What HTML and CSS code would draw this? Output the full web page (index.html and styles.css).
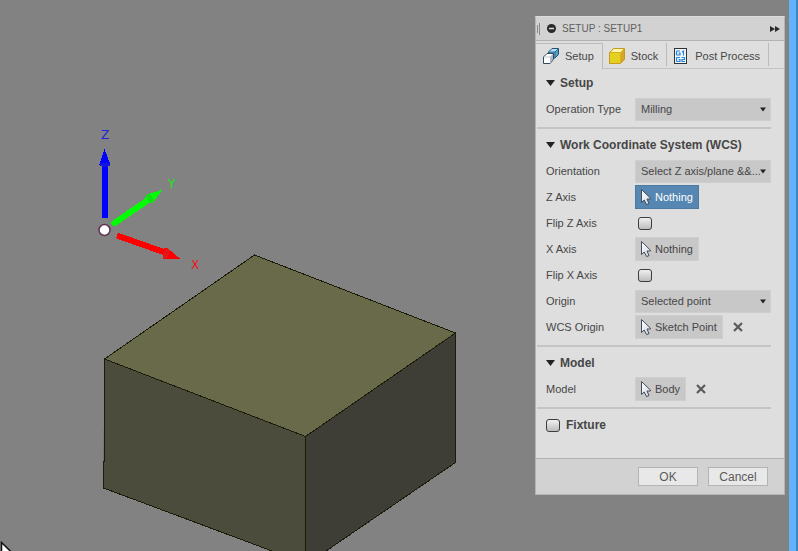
FILE: index.html
```html
<!DOCTYPE html>
<html lang="en">
<head>
<meta charset="utf-8">
<title>Setup</title>
<meta name="viewport" content="width=device-width, initial-scale=1">
<link rel="stylesheet" href="styles.css">
</head>
<body>
<svg class="symbols" aria-hidden="true">
  <defs>
    <linearGradient id="cursor-fill" x1="0" y1="0" x2="1" y2="1">
      <stop offset="0" stop-color="#fff"/><stop offset="1" stop-color="#cfd5de"/>
    </linearGradient>
    <symbol id="cursor" viewBox="0 0 12 18">
      <path d="M1.5 1.5V14.5L4.2 12L6.6 16.6L9 15.6L7 11H10.5V10.2Z" fill="url(#cursor-fill)" stroke="#434b5c" stroke-width="1"/>
    </symbol>
    <symbol id="cross" viewBox="0 0 10 10">
      <path d="M1 1L9 9M9 1L1 9" stroke="#5a5a5a" stroke-width="2.2" fill="none"/>
    </symbol>
    <symbol id="caret" viewBox="0 0 6 5"><path d="M0 0.5H6L3 4.5Z" fill="#222"/></symbol>
    <symbol id="disclosure" viewBox="0 0 9 6"><path d="M0 0H9L4.5 6Z" fill="#222"/></symbol>
  </defs>
</svg>
<main class="viewport">
  <svg class="scene" role="img" aria-label="Stock body with coordinate axes">
    <path d="M254.500 255L455.500 333L305.500 436.500L104.500 359Z" fill="#696a4a"/>
    <path d="M104.500 359L305.500 436.500V563.500L103.500 488Z" fill="#4b4c3b"/>
    <path d="M305.500 436.500L455.500 333V462.500L305.500 565Z" fill="#3e3d36"/>
    <g fill="none" stroke="#1b1b0a" stroke-width="1" shape-rendering="crispEdges">
      <path d="M254.500 255L455.500 333L305.500 436.500L104.500 359Z"/>
      <path d="M104.500 359V461H103.500V488L305.500 563.500V436.500M455.500 333V462.500L305.500 565"/>
    </g>
    <g shape-rendering="crispEdges">
      <path d="M102 217.500V164H108V217.500Z" fill="#00f"/>
      <path d="M104.500 149L110.500 165Q105 169 99 165Z" fill="#00f"/>
      <path d="M99 165Q105 160 110.500 165Q105 169 99 165Z" fill="#1414dc"/>
      <path d="M114.500 223L149 199.500" stroke="#0f0" stroke-width="6" stroke-linecap="round"/>
      <path d="M162 190L153 203L148 203.500L145 197L148 194Z" fill="#0f0"/>
      <ellipse cx="150" cy="198.500" rx="3" ry="5" transform="rotate(-35 150 198.500)" fill="#10e010"/>
      <path d="M117 235.500L165 252.500" stroke="red" stroke-width="6"/>
      <path d="M181 259.500L163 258.500L164 248L168 248.500Z" fill="red"/>
      <ellipse cx="166" cy="253.500" rx="3" ry="5.500" transform="rotate(20 166 253.500)" fill="#e61414"/>
    </g>
    <circle cx="104.500" cy="230" r="5.500" fill="#fff" stroke="#603550" stroke-width="1.500"/>
    <g class="axis-name">
      <text x="101" y="139" fill="#2222dc">Z</text>
      <text x="168" y="188" fill="#0cef0c">Y</text>
      <text x="191" y="269" fill="#ec1818">X</text>
    </g>
    <path d="M1.500 542.500V560H19.500Z" fill="#fff" stroke="#111" stroke-width="1.500"/>
  </svg>

  <form class="panel" onsubmit="return false">
    <header class="titlebar">
      <svg class="grip" viewBox="0 0 3 12"><path d="M0.500 2V10M2.500 0V12" stroke="#888" fill="none"/></svg>
      <svg class="collapse" viewBox="0 0 9 9"><circle cx="4.500" cy="4.500" r="4.500" fill="#2a2a2a"/><path d="M2 4.500H7" stroke="#ddd" stroke-width="1.500"/></svg>
      <h1 class="title">SETUP : SETUP1</h1>
      <button class="expand" type="button" aria-label="Dock panel"><svg viewBox="0 0 10 6"><path d="M0 0L5 3L0 6ZM5 0L10 3L5 6Z" fill="#2a2a2a"/></svg></button>
    </header>

    <nav class="tabs">
      <button class="tab tab-active" type="button">
        <svg class="tab-icon" viewBox="0 0 16 16">
          <path d="M5.500 4L9 0.500H15.500V6.500L12 10H5.500Z" fill="#5b9cc4" stroke="#1f5279"/>
          <path d="M6 4L9.200 1H15L12 4Z" fill="#b9dcef"/>
          <path d="M5.500 4H12L15 1M12 4V9.500" stroke="#2f719e" fill="none"/>
          <path d="M0.500 9L4 5.500H10.500V11.500L7 15.500H0.500Z" fill="#fff" stroke="#34485e"/>
          <path d="M7 9.500V15L10 11.500V6.500Z" fill="#a9b6c5"/>
          <path d="M1 9H7L10 6" stroke="#c2cbd5" fill="none"/>
        </svg>Setup
      </button>
      <button class="tab" type="button">
        <svg class="tab-icon" viewBox="0 0 16 16">
          <path d="M0.500 4.500L4.500 0.500H15.500V11.500L11.500 15.500H0.500Z" fill="#e5d01f" stroke="#c99a1c"/>
          <path d="M1.500 4.200L5 1H14.500L11.500 4.200Z" fill="#fff7b0"/>
          <path d="M12 5V15L15 11.500V1.500Z" fill="#d5a62a"/>
          <path d="M1 4.500H11.500V15M11.500 4.500L15 1" stroke="#d8b025" fill="none"/>
        </svg>Stock
      </button>
      <button class="tab" type="button">
        <svg class="tab-icon tab-icon-code" viewBox="0 0 13 16">
          <rect x="0.500" y="0.500" width="12" height="15" fill="#f2f5f8" stroke="#30343a"/>
          <g fill="none" stroke="#2486e0" stroke-width="1.200">
            <path d="M6 3H3L2.500 3.500V6.500L3 7H6V5H4.500M8 4L9.500 3V7.500"/>
            <path d="M6 9.500H3L2.500 10V13L3 13.500H6V11.500H4.500M7.500 9.500H10.500V11.500H8V13.500H11"/>
          </g>
        </svg>Post Process
      </button>
    </nav>

    <div class="body">
      <section class="group">
        <h2 class="heading"><svg class="disclosure"><use href="#disclosure"/></svg>Setup</h2>
        <div class="row">
          <label class="label" for="operation">Operation Type</label>
          <div class="dropdown"><select id="operation"><option>Milling</option></select><svg class="caret"><use href="#caret"/></svg></div>
        </div>
      </section>

      <section class="group">
        <h2 class="heading"><svg class="disclosure"><use href="#disclosure"/></svg>Work Coordinate System (WCS)</h2>
        <div class="row">
          <label class="label" for="orientation">Orientation</label>
          <div class="dropdown"><select id="orientation"><option>Select Z axis/plane &amp;&amp;...</option></select><svg class="caret"><use href="#caret"/></svg></div>
        </div>
        <div class="row">
          <label class="label" for="z-axis">Z Axis</label>
          <button class="pick pick-active" id="z-axis" type="button"><svg class="cursor"><use href="#cursor"/></svg>Nothing</button>
        </div>
        <div class="row">
          <label class="label" for="flip-z">Flip Z Axis</label>
          <input class="check check-row" id="flip-z" type="checkbox">
        </div>
        <div class="row">
          <label class="label" for="x-axis">X Axis</label>
          <button class="pick" id="x-axis" type="button"><svg class="cursor"><use href="#cursor"/></svg>Nothing</button>
        </div>
        <div class="row">
          <label class="label" for="flip-x">Flip X Axis</label>
          <input class="check check-row" id="flip-x" type="checkbox">
        </div>
        <div class="row">
          <label class="label" for="origin">Origin</label>
          <div class="dropdown"><select id="origin"><option>Selected point</option></select><svg class="caret"><use href="#caret"/></svg></div>
        </div>
        <div class="row">
          <label class="label" for="wcs-origin">WCS Origin</label>
          <button class="pick" id="wcs-origin" type="button"><svg class="cursor"><use href="#cursor"/></svg>Sketch Point</button>
          <button class="clear" type="button" aria-label="Clear WCS origin"><svg><use href="#cross"/></svg></button>
        </div>
      </section>

      <section class="group">
        <h2 class="heading"><svg class="disclosure"><use href="#disclosure"/></svg>Model</h2>
        <div class="row">
          <label class="label" for="model">Model</label>
          <button class="pick" id="model" type="button"><svg class="cursor"><use href="#cursor"/></svg>Body</button>
          <button class="clear" type="button" aria-label="Clear model"><svg><use href="#cross"/></svg></button>
        </div>
      </section>

      <section class="group">
        <div class="row fixture">
          <input class="check" id="fixture" type="checkbox">
          <label for="fixture">Fixture</label>
        </div>
      </section>
    </div>

    <footer class="actions">
      <button class="action" type="submit">OK</button>
      <button class="action" type="button">Cancel</button>
    </footer>
  </form>
</main>
<div class="edge"></div>
</body>
</html>
```

FILE: styles.css
```css
* {
  box-sizing: border-box;
}

body {
  margin: 0;
  min-height: 100vh;
  display: flex;
  overflow: hidden;
  background: #828282;
  color: #464646;
  font: 11px/14px "Liberation Sans", Arial, sans-serif;
}

button,
select,
input {
  margin: 0;
  padding: 0;
  border: 0;
  font: inherit;
  color: inherit;
  background: none;
}

svg {
  flex: none;
}

.symbols {
  position: absolute;
  width: 0;
  height: 0;
}

.viewport {
  position: relative;
  flex: 1;
  display: flex;
  justify-content: flex-end;
  align-items: flex-start;
  padding: 16px 4px 16px 16px;
}

.scene {
  position: absolute;
  inset: 0;
  width: 100%;
  height: 100%;
}

.axis-name {
  font: 12px "DejaVu Sans", sans-serif;
}

.edge {
  width: 9px;
  background: #64b2fb;
  border-right: 2px solid #3f83c4;
}

/* Setup panel */
.panel {
  position: relative;
  width: 250px;
  background: #dedede;
  border: 1px solid #b4b4b4;
  border-top-color: #dcdcdc;
}

.titlebar {
  display: flex;
  align-items: center;
  height: 24px;
  padding: 0 4px 0 1px;
  background: #d2d2d2;
  border-bottom: 1px solid #b2b2b2;
  color: #606060;
}

.grip {
  width: 3px;
  height: 12px;
}

.collapse {
  width: 9px;
  height: 9px;
  margin: 0 6px 0 7px;
}

.title {
  flex: 1;
  margin: 0;
  font-size: 10px;
  font-weight: normal;
}

.expand {
  display: flex;
}

.expand svg {
  width: 10px;
  height: 6px;
}

.tabs {
  display: flex;
  height: 28px;
  padding-top: 2px;
  border-bottom: 1px solid #c4c4c4;
}

.tab {
  display: flex;
  align-items: center;
  gap: 6px;
  margin-bottom: 2px;
  padding: 2px 8px 0 6px;
  border-right: 1px solid #bababa;
}

.tab-active {
  margin-bottom: -1px;
  padding: 0 8px 1px 7px;
  background: #dedede;
  border-top: 1px solid #bababa;
}

.tab-icon {
  width: 16px;
  height: 16px;
}

.tab-icon-code {
  width: 13px;
  margin: 0 2px 0 1px;
}

.body {
  padding: 1px 13px 20px 1px;
}

.group {
  padding-left: 9px;
}

.group + .group {
  margin-top: 5px;
  padding-top: 3px;
  border-top: 2px solid #c4c4c4;
}

.heading {
  display: flex;
  align-items: center;
  gap: 5px;
  height: 26px;
  margin: 0;
  font-size: 12px;
  font-weight: bold;
}

.disclosure {
  width: 9px;
  height: 6px;
}

.row {
  display: flex;
  align-items: center;
  height: 26px;
}

.label {
  width: 89px;
}

.dropdown {
  position: relative;
  flex: 1;
}

.dropdown select {
  display: block;
  width: 100%;
  height: 23px;
  padding: 0 8px 0 5px;
  appearance: none;
  background: #c8c8c8;
  border: 1px solid #cecece;
  border-radius: 0;
}

.caret {
  position: absolute;
  right: 5px;
  top: 9px;
  width: 6px;
  height: 5px;
  pointer-events: none;
}

.pick {
  display: flex;
  align-items: center;
  gap: 3px;
  height: 24px;
  padding: 0 5px 0 4px;
  background: #c8c8c8;
  border: 1px solid #cecece;
}

.pick-active {
  background: #5587b2;
  border-color: #4b7aa3;
  color: #fff;
}

.cursor {
  width: 12px;
  height: 18px;
}

.clear {
  display: flex;
  margin-left: 10px;
}

.clear svg {
  width: 10px;
  height: 10px;
}

.check {
  width: 14px;
  height: 13px;
  appearance: none;
  background: linear-gradient(#f0f0f0, #bdbdbd);
  border: 1px solid #3d3d3d;
  border-radius: 3px;
}

.check-row {
  margin-left: 3px;
}

.fixture {
  gap: 6px;
  font-size: 12px;
  font-weight: bold;
}

.actions {
  display: flex;
  justify-content: flex-end;
  gap: 10px;
  padding: 8px 16px;
  background: #d2d2d2;
  border-top: 1px solid #b2b2b2;
}

.action {
  width: 60px;
  height: 19px;
  background: #e8e8e8;
  border: 1px solid #b4b4b4;
  color: #5a5a5a;
  font-size: 12px;
}
```
